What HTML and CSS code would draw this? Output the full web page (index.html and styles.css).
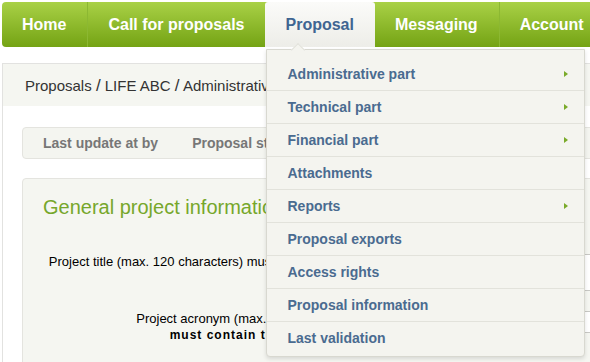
FILE: index.html
```html
<!DOCTYPE html>
<html lang="en">
  <head>
    <meta charset="UTF-8">
    <meta name="viewport" content="width=device-width, initial-scale=1.0">
    <title>Proposal - General project information</title>
    <link rel="stylesheet" href="styles.css">
  </head>
<body>
  <div class="page">
    <nav class="topnav">
      <ul class="menu">
        <li class="menu-item"><a href="#">Home</a></li>
        <li class="menu-item divided"><a href="#">Call for proposals</a></li>
        <li class="menu-item active">
          <a href="#">Proposal</a>
          <ul class="dropdown">
            <li><a href="#">Administrative part</a><span class="arrow"></span></li>
            <li><a href="#">Technical part</a><span class="arrow"></span></li>
            <li><a href="#">Financial part</a><span class="arrow"></span></li>
            <li><a href="#">Attachments</a></li>
            <li><a href="#">Reports</a><span class="arrow"></span></li>
            <li><a href="#">Proposal exports</a></li>
            <li><a href="#">Access rights</a></li>
            <li><a href="#">Proposal information</a></li>
            <li><a href="#">Last validation</a></li>
          </ul>
        </li>
        <li class="menu-item"><a href="#">Messaging</a></li>
        <li class="menu-item divided"><a href="#">Account</a></li>
      </ul>
    </nav>

    <div class="content">
      <div class="breadcrumb">
        Proposals <span class="sep">/</span> LIFE ABC <span class="sep">/</span> Administrative part <span class="sep">/</span> General information
      </div>

      <div class="inner">
        <div class="status">
          <span>Last update at by</span>
          <span>Proposal status: Draft</span>
        </div>

        <div class="box">
          <h2>General project information</h2>
          <div class="row">
            <label class="label" for="title">Project title (max. 120 characters) must be worded in English:</label>
            <textarea class="field tall" id="title"></textarea>
          </div>
          <div class="row">
            <label class="label" for="acronym">Project acronym (max. 25 characters)<br><strong>must contain the word LIFE</strong></label>
            <input class="field" type="text" id="acronym">
          </div>
        </div>
      </div>
    </div>
  </div>
</body>
</html>
```

FILE: styles.css
```css
body {
  margin: 0;
  padding: 0;
  font-family: "Liberation Sans", Arial, sans-serif;
  background: #fff;
  color: #333;
  overflow: hidden;
}

.page {
  width: 760px;
  padding: 2px;
}

/* top navigation */
.topnav {
  height: 45px;
  background: linear-gradient(to bottom, #a9d146, #74a314);
  border-radius: 4px 0 0 4px;
}

.menu {
  list-style: none;
  margin: 0;
  padding: 0;
  display: flex;
  height: 45px;
}

.menu-item {
  position: relative;
}

.menu-item.divided {
  border-left: 1px solid #8cb832;
}

.menu-item > a {
  display: block;
  padding: 0 21px 0 20px;
  line-height: 45px;
  color: #fff;
  font-size: 16px;
  font-weight: bold;
  text-decoration: none;
}

.menu-item.active {
  background: linear-gradient(to bottom, #fbfbf9, #ededE8);
  border-radius: 3px 3px 0 0;
}

.menu-item.active > a {
  color: #3f6592;
}

/* dropdown */
.dropdown {
  position: absolute;
  top: 47px;
  left: 1px;
  width: 317px;
  margin: 0;
  padding: 8px 0 2px 0;
  list-style: none;
  background: #f4f4ef;
  border: 1px solid #d8d8d0;
  border-radius: 0 0 4px 4px;
  box-shadow: 0 2px 4px rgba(0, 0, 0, 0.12);
  z-index: 10;
}

.dropdown::before {
  content: "";
  position: absolute;
  top: -5px;
  left: 26px;
  width: 9px;
  height: 9px;
  background: #f4f4ef;
  border-top: 1px solid #e2e2db;
  border-left: 1px solid #e2e2db;
  transform: rotate(45deg);
}

.dropdown li {
  position: relative;
  display: flex;
  align-items: center;
  justify-content: space-between;
  height: 32px;
  padding: 0 16px 0 20px;
  border-bottom: 1px solid #e2e2db;
}

.dropdown li:last-child {
  border-bottom: none;
}

.dropdown a {
  color: #4a6b90;
  font-size: 14px;
  font-weight: bold;
  text-decoration: none;
}

.arrow {
  width: 0;
  height: 0;
  border-top: 3px solid transparent;
  border-bottom: 3px solid transparent;
  border-left: 4px solid #7aaa2a;
}

/* page content */
.content {
  margin-top: 16px;
  border: 1px solid #e2e2e0;
  border-bottom: none;
}

.breadcrumb {
  height: 42px;
  line-height: 44px;
  padding: 0 22px;
  background: #f5f6f1;
  font-size: 15px;
  color: #333;
  white-space: nowrap;
}

.breadcrumb .sep {
  font-size: 17px;
}

.inner {
  padding: 21px 20px 0 19px;
}

.status {
  display: flex;
  gap: 34px;
  height: 30px;
  line-height: 30px;
  padding: 0 20px;
  background: #f4f5f0;
  border: 1px solid #e4e4df;
  border-radius: 4px;
  font-size: 14px;
  font-weight: bold;
  color: #777;
}

.box {
  margin-top: 19px;
  padding: 17px 20px 20px 20px;
  background: #f5f6f1;
  border: 1px solid #e4e4df;
  border-radius: 4px;
}

.box h2 {
  margin: 0 0 35px 0;
  font-size: 20px;
  font-weight: normal;
  color: #76a72b;
}

.row {
  display: flex;
  align-items: flex-start;
  margin-bottom: 20px;
}

.label {
  width: 310px;
  flex-shrink: 0;
  padding-right: 20px;
  text-align: right;
  font-size: 13px;
  line-height: 16px;
  color: #000;
}

.label strong {
  font-size: 12px;
  letter-spacing: 1px;
}

.field {
  box-sizing: border-box;
  width: 330px;
  height: 22px;
  border: 1px solid #c8c8c4;
  background: #fff;
}

.field.tall {
  height: 37px;
  resize: none;
}
```
